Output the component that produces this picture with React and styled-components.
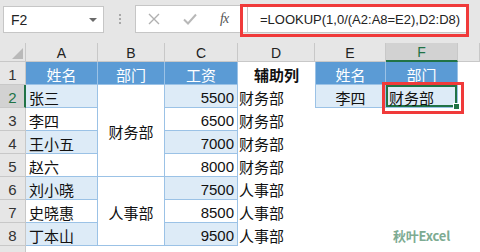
import React from 'react';
import styled, { createGlobalStyle } from 'styled-components';

const GlobalStyle = createGlobalStyle`
  html, body { margin: 0; padding: 0; background: #fff; }
  body { font-family: "Liberation Sans", Arial, sans-serif; }
`;

const CJK = `"Noto Sans CJK SC", "Liberation Sans", sans-serif`;
const LAT = `"Liberation Sans", Arial, sans-serif`;
const BLUE = '#5b9bd5';
const BAND = '#ddebf7';
const LINE = '#9bc2e6';
const GRID = '#c8c8c8';
const HEADBG = '#e6e6e6';
const GREEN = '#217346';
const RED = '#f03a3a';

const Page = styled.div`
  position: relative;
  width: 480px;
  height: 252px;
  overflow: hidden;
  background: #fff;
`;

const Toolbar = styled.div`
  height: 43px;
  background: ${HEADBG};
  display: flex;
  align-items: flex-start;
  padding-top: 5px;
  box-sizing: border-box;
`;

const NameBox = styled.div`
  margin: 1px 0 0 3px;
  width: 101px;
  height: 27px;
  box-sizing: border-box;
  background: #fff;
  border: 1px solid #c6c6c6;
  display: flex;
  align-items: center;
  justify-content: space-between;
  padding: 0 6px 0 7px;
  font: 14px ${LAT};
  color: #222;
`;

const Caret = styled.span`
  width: 0;
  height: 0;
  border-left: 4px solid transparent;
  border-right: 4px solid transparent;
  border-top: 4px solid #6a6a6a;
`;

const Grip = styled.div`
  width: 31px;
  height: 28px;
  display: flex;
  flex-direction: column;
  align-items: center;
  justify-content: center;
  gap: 2px;
  span { width: 2px; height: 2px; background: #a8a8a8; }
`;

const FormulaBox = styled.div`
  position: relative;
  width: 333px;
  height: 28px;
  box-sizing: border-box;
  background: #fff;
  border: 1px solid #c6c6c6;
  display: flex;
  align-items: stretch;
`;

const IconSection = styled.div`
  width: 111px;
  display: flex;
  align-items: center;
  padding-left: 12px;
  gap: 23px;
  box-sizing: border-box;
`;

const Fx = styled.span`
  font: italic 14px "Liberation Serif", "Times New Roman", serif;
  color: #555;
  letter-spacing: -1px;
`;

const FormulaInput = styled.div`
  flex: 1;
  border-left: 1px solid #c6c6c6;
  display: flex;
  align-items: center;
  padding-left: 12px;
  font: 13px ${LAT};
  color: #222;
  white-space: nowrap;
`;

const RedFrame = styled.div`
  position: absolute;
  z-index: 5;
  left: ${p => p.$l}px;
  top: ${p => p.$t}px;
  width: ${p => p.$w}px;
  height: ${p => p.$h}px;
  border: 3px solid ${RED};
  box-sizing: border-box;
  pointer-events: none;
`;

const Sheet = styled.div`
  display: grid;
  grid-template-columns: 26px 72px 67px 73px 77px 71px 72px 1fr;
  grid-template-rows: 19px repeat(8, 23px) 10px;
`;

const Corner = styled.div`
  background: ${HEADBG};
  border-right: 1px solid ${GRID};
  border-bottom: 1px solid ${GRID};
  position: relative;
  &::after {
    content: '';
    position: absolute;
    right: 2px;
    bottom: 2px;
    width: 0;
    height: 0;
    border-left: 11px solid transparent;
    border-bottom: 11px solid #b9b9b9;
  }
`;

const ColHead = styled.div`
  background: ${p => (p.$active ? '#d2d2d2' : HEADBG)};
  border-right: 1px solid ${GRID};
  border-bottom: ${p => (p.$active ? `2px solid ${GREEN}` : `1px solid ${GRID}`)};
  box-sizing: border-box;
  display: flex;
  align-items: center;
  justify-content: center;
  font: 14px ${LAT};
  color: ${p => (p.$active ? GREEN : '#222')};
  padding-top: 1px;
`;

const RowHead = styled.div`
  background: ${p => (p.$active ? '#d2d2d2' : HEADBG)};
  border-right: ${p => (p.$active ? `2px solid ${GREEN}` : `1px solid ${GRID}`)};
  border-bottom: 1px solid ${GRID};
  box-sizing: border-box;
  display: flex;
  align-items: center;
  justify-content: center;
  font: 15px ${LAT};
  color: ${p => (p.$active ? GREEN : '#333')};
  padding-top: 2px;
  padding-left: ${p => (p.$active ? '1px' : '0')};
`;

const fills = { head: BLUE, band: BAND, white: '#fff', none: '#fff' };

const Cell = styled.div`
  position: relative;
  box-sizing: border-box;
  grid-row: ${p => (p.$span ? `span ${p.$span}` : 'auto')};
  background: ${p => fills[p.$fill || 'none']};
  border-right: ${p => (p.$lined ? `1px solid ${LINE}` : 'none')};
  border-bottom: ${p => (p.$lined ? `1px solid ${LINE}` : 'none')};
  border-left: ${p => (p.$leftLine ? `1px solid ${LINE}` : 'none')};
  display: flex;
  align-items: center;
  justify-content: ${p => ({ left: 'flex-start', right: 'flex-end', center: 'center' }[p.$align || 'left'])};
  padding: 2px ${p => (p.$align === 'right' ? '3px' : '0')} 0 ${p => (p.$align === 'left' || !p.$align ? (p.$tight ? '1px' : '3px') : '0')};
  font-family: ${p => (p.$num ? LAT : CJK)};
  font-size: 15px;
  font-weight: ${p => (p.$bold ? 700 : 400)};
  color: ${p => (p.$fill === 'head' ? '#fff' : '#111')};
  white-space: nowrap;
  ${p => p.$selected && `box-shadow: inset 0 0 0 2px ${GREEN};`}
`;

const Handle = styled.span`
  position: absolute;
  right: -3px;
  bottom: -3px;
  width: 5px;
  height: 5px;
  background: ${GREEN};
  border: 1px solid #fff;
  z-index: 4;
`;

const Watermark = styled.div`
  position: absolute;
  left: 393px;
  top: 226px;
  font: 700 13px ${CJK};
  color: #7dab92;
  letter-spacing: -0.2px;
`;

const XIcon = () => (
  <svg width="12" height="12" viewBox="0 0 12 12">
    <path d="M1 1 L11 11 M11 1 L1 11" stroke="#b0b0b0" strokeWidth="1.4" fill="none" />
  </svg>
);

const CheckIcon = () => (
  <svg width="14" height="12" viewBox="0 0 14 12">
    <path d="M1 6.5 L5 10.5 L13 1.5" stroke="#b8b8b8" strokeWidth="2" fill="none" />
  </svg>
);

const data = [
  ['张三', 5500, '财务部'],
  ['李四', 6500, '财务部'],
  ['王小五', 7000, '财务部'],
  ['赵六', 8000, '财务部'],
  ['刘小晓', 7500, '人事部'],
  ['史晓惠', 8500, '人事部'],
  ['丁本山', 9500, '人事部'],
];

export default function App() {
  const cols = ['A', 'B', 'C', 'D', 'E', 'F', ''];
  return (
    <Page>
      <GlobalStyle />
      <Toolbar>
        <NameBox>
          F2
          <Caret />
        </NameBox>
        <Grip>
          <span />
          <span />
          <span />
        </Grip>
        <FormulaBox>
          <IconSection>
            <XIcon />
            <CheckIcon />
            <Fx>fx</Fx>
          </IconSection>
          <FormulaInput>=LOOKUP(1,0/(A2:A8=E2),D2:D8)</FormulaInput>
          <RedFrame $l={104} $t={-2} $w={229} $h={33} />
        </FormulaBox>
      </Toolbar>
      <Sheet>
        <Corner />
        {cols.map((c, i) => (
          <ColHead key={i} $active={c === 'F'}>{c}</ColHead>
        ))}

        <RowHead>1</RowHead>
        <Cell $fill="head" $lined $align="center">姓名</Cell>
        <Cell $fill="head" $lined $align="center">部门</Cell>
        <Cell $fill="head" $lined $align="center">工资</Cell>
        <Cell $align="center" $bold>辅助列</Cell>
        <Cell $fill="head" $lined $leftLine $align="center">姓名</Cell>
        <Cell $fill="head" $lined $align="center">部门</Cell>
        <Cell />

        {data.map(([name, pay, dept], i) => {
          const band = i % 2 === 0 ? 'band' : 'white';
          const r = i + 2;
          return (
            <React.Fragment key={r}>
              <RowHead $active={r === 2}>{r}</RowHead>
              <Cell $fill={band} $lined>{name}</Cell>
              {r === 2 && <Cell $fill="white" $lined $span={4} $align="center">财务部</Cell>}
              {r === 6 && <Cell $fill="white" $lined $span={3} $align="center">人事部</Cell>}
              <Cell $fill={band} $lined $align="right" $num>{pay}</Cell>
              <Cell $tight>{dept}</Cell>
              {r === 2 ? (
                <>
                  <Cell $fill="band" $lined $leftLine $align="center">李四</Cell>
                  <Cell $fill="band" $lined $selected>
                    财务部
                    <Handle />
                    <RedFrame $l={-4} $t={-3} $w={82} $h={32} />
                  </Cell>
                </>
              ) : (
                <>
                  <Cell />
                  <Cell />
                </>
              )}
              <Cell />
            </React.Fragment>
          );
        })}

        <RowHead />
        <Cell />
        <Cell />
        <Cell />
        <Cell />
        <Cell />
        <Cell />
        <Cell />
      </Sheet>
      <Watermark>秋叶Excel</Watermark>
    </Page>
  );
}
